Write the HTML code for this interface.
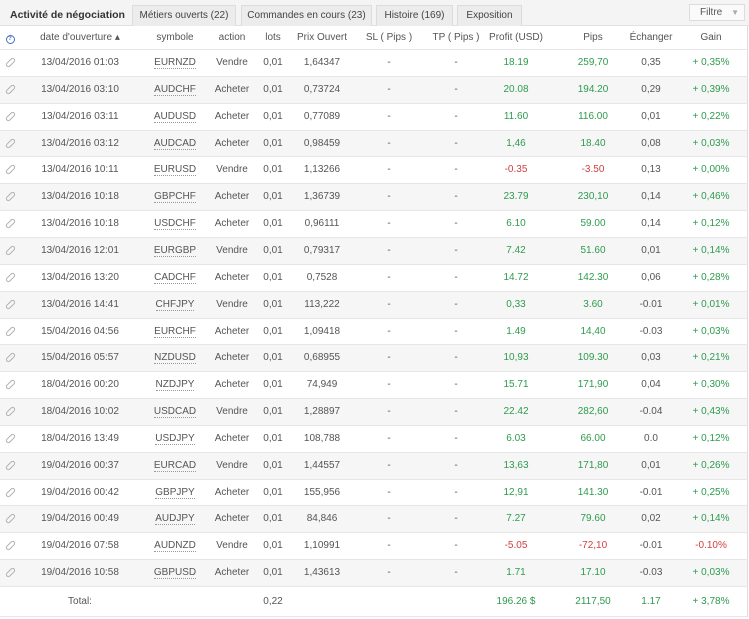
<!DOCTYPE html>
<html><head><meta charset="utf-8"><style>
*{margin:0;padding:0;box-sizing:border-box}
body{width:749px;height:619px;background:#fff;font-family:"Liberation Sans",Tahoma,sans-serif;font-size:10px;color:#555;position:relative;overflow:hidden}
.bar{position:absolute;left:0;top:0;width:749px;height:26px;background:#f4f4f4;border-bottom:1px solid #e2e2e2}
.tab{position:absolute;top:5px;height:21px;line-height:20px;text-align:center;background:#ececec;border:1px solid #dcdcdc;border-bottom:none;font-size:10px;color:#444;white-space:nowrap}
.act{position:absolute;left:10px;top:5px;line-height:20px;font-weight:bold;font-size:10.5px;color:#333;white-space:nowrap}
.filt{position:absolute;left:689px;top:4px;width:56px;height:17px;background:#fafafa;border:1px solid #ddd;font-size:10px;line-height:15px;padding-left:10px;color:#555}
.filt span{position:absolute;right:5px;top:0;color:#aaa;font-size:8px}
.row{position:absolute;left:0;width:748px;border-bottom:1px solid #e6e6e6;border-right:1px solid #ddd}
.row.z{background:#f6f6f6}
.c{position:absolute;top:0;width:100px;margin-left:-50px;text-align:center;white-space:nowrap}
.g{color:#2e9b4e}.r{color:#d04040}
.s{border-bottom:1px dotted #999}
.clip{display:inline-block;width:11px;height:5px;border:1px solid #b0b0b0;border-radius:3px;transform:rotate(-45deg)}
.q{display:inline-block;width:9px;height:9px;border-radius:50%;border:1px solid #4a6cc4;color:#4a6cc4;font-size:6px;line-height:7px;font-weight:bold}
</style></head><body>
<div class="bar"></div>
<div class="act">Activité de négociation</div>
<div class="tab" style="left:132px;width:104px">Métiers ouverts (22)</div>
<div class="tab" style="left:241px;width:131px">Commandes en cours (23)</div>
<div class="tab" style="left:376px;width:77px">Histoire (169)</div>
<div class="tab" style="left:457px;width:65px">Exposition</div>
<div class="filt">Filtre<span>▼</span></div>
<div id="w"></div>
<script>
var X=[10,80,175,232,273,322,389,456,516,593,651,711];
var d=[["13/04/2016 01:03","EURNZD","Vendre","1,64347","18.19","259,70","0,35","+ 0,35%"],
["13/04/2016 03:10","AUDCHF","Acheter","0,73724","20.08","194.20","0,29","+ 0,39%"],
["13/04/2016 03:11","AUDUSD","Acheter","0,77089","11.60","116.00","0,01","+ 0,22%"],
["13/04/2016 03:12","AUDCAD","Acheter","0,98459","1,46","18.40","0,08","+ 0,03%"],
["13/04/2016 10:11","EURUSD","Vendre","1,13266","-0.35","-3.50","0,13","+ 0,00%"],
["13/04/2016 10:18","GBPCHF","Acheter","1,36739","23.79","230,10","0,14","+ 0,46%"],
["13/04/2016 10:18","USDCHF","Acheter","0,96111","6.10","59.00","0,14","+ 0,12%"],
["13/04/2016 12:01","EURGBP","Vendre","0,79317","7.42","51.60","0,01","+ 0,14%"],
["13/04/2016 13:20","CADCHF","Acheter","0,7528","14.72","142.30","0,06","+ 0,28%"],
["13/04/2016 14:41","CHFJPY","Vendre","113,222","0,33","3.60","-0.01","+ 0,01%"],
["15/04/2016 04:56","EURCHF","Acheter","1,09418","1.49","14,40","-0.03","+ 0,03%"],
["15/04/2016 05:57","NZDUSD","Acheter","0,68955","10,93","109.30","0,03","+ 0,21%"],
["18/04/2016 00:20","NZDJPY","Acheter","74,949","15.71","171,90","0,04","+ 0,30%"],
["18/04/2016 10:02","USDCAD","Vendre","1,28897","22.42","282,60","-0.04","+ 0,43%"],
["18/04/2016 13:49","USDJPY","Acheter","108,788","6.03","66.00","0.0","+ 0,12%"],
["19/04/2016 00:37","EURCAD","Vendre","1,44557","13,63","171,80","0,01","+ 0,26%"],
["19/04/2016 00:42","GBPJPY","Acheter","155,956","12,91","141.30","-0.01","+ 0,25%"],
["19/04/2016 00:49","AUDJPY","Acheter","84,846","7.27","79.60","0,02","+ 0,14%"],
["19/04/2016 07:58","AUDNZD","Vendre","1,10991","-5.05","-72,10","-0.01","-0.10%"],
["19/04/2016 10:58","GBPUSD","Acheter","1,43613","1.71","17.10","-0.03","+ 0,03%"]];
function row(top,h,cells,cls){var s='<div class="row '+(cls||'')+'" style="top:'+top+'px;height:'+h+'px;line-height:'+(h-1)+'px">';
cells.forEach(function(c,i){if(c!==null)s+='<div class="c" style="left:'+X[i]+'px">'+c+'</div>';});return s+'</div>';}
var h=row(26,24,['<span class="q">?</span>',"date d'ouverture ▴","symbole","action","lots","Prix Ouvert","SL ( Pips )","TP ( Pips )","Profit (USD)","Pips","Échanger","Gain"]);
d.forEach(function(r,i){var c=r[4][0]=="-"?"r":"g",c2=r[7][0]=="-"?"r":"g";
var t=Math.round(50+i*26.85),b=Math.round(50+(i+1)*26.85);
h+=row(t,b-t,['<span class="clip"></span>',r[0],'<span class="s">'+r[1]+'</span>',r[2],"0,01",r[3],"-","-",'<span class="'+c+'">'+r[4]+'</span>','<span class="'+c+'">'+r[5]+'</span>',r[6],'<span class="'+c2+'">'+r[7]+'</span>'],i%2?'z':'');});
h+=row(587,30,[null,"Total:",null,null,"0,22",null,null,null,'<span class="g">196.26 $</span>','<span class="g">2117,50</span>','<span class="g">1.17</span>','<span class="g">+ 3,78%</span>']);
document.getElementById("w").innerHTML=h;
</script>
</body></html>
